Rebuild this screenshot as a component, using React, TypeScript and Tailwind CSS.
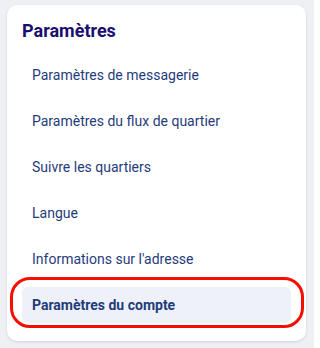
import { Fragment } from 'react'

const items = [
  'Paramètres de messagerie',
  'Paramètres du flux de quartier',
  'Suivre les quartiers',
  'Langue',
  "Informations sur l'adresse",
  'Paramètres du compte',
]

export default function App() {
  const active = items.length - 1

  return (
    <div
      className="w-[314px] h-[348px] bg-[#eef0f4] pt-[5px] pl-[7px]"
      style={{ fontFamily: 'Roboto, "Liberation Sans", sans-serif' }}
    >
      <div className="relative w-[299px] h-[336px] bg-white rounded-[10px] shadow-[0_1px_3px_rgba(0,0,0,0.12)] px-[15px] pt-[15px]">
        <h2 className="text-[18px] leading-[22px] font-bold text-[#1a0f6e]">
          Paramètres
        </h2>

        <nav className="mt-[15px] flex flex-col gap-[10px]">
          {items.map((label, i) => (
            <Fragment key={label}>
              <div
                className={`h-[36px] flex items-center px-[10px] rounded-[6px] text-[14px] text-[#1f3c7c] ${
                  i === active ? 'bg-[#eef2f8] font-bold' : ''
                }`}
              >
                {label}
              </div>
            </Fragment>
          ))}
        </nav>

        {/* annotation ring round the active row */}
        <div className="absolute left-[3px] top-[272px] w-[294px] h-[51px] rounded-[20px] border-[3px] border-[#f40f02] pointer-events-none" />
      </div>
    </div>
  )
}
